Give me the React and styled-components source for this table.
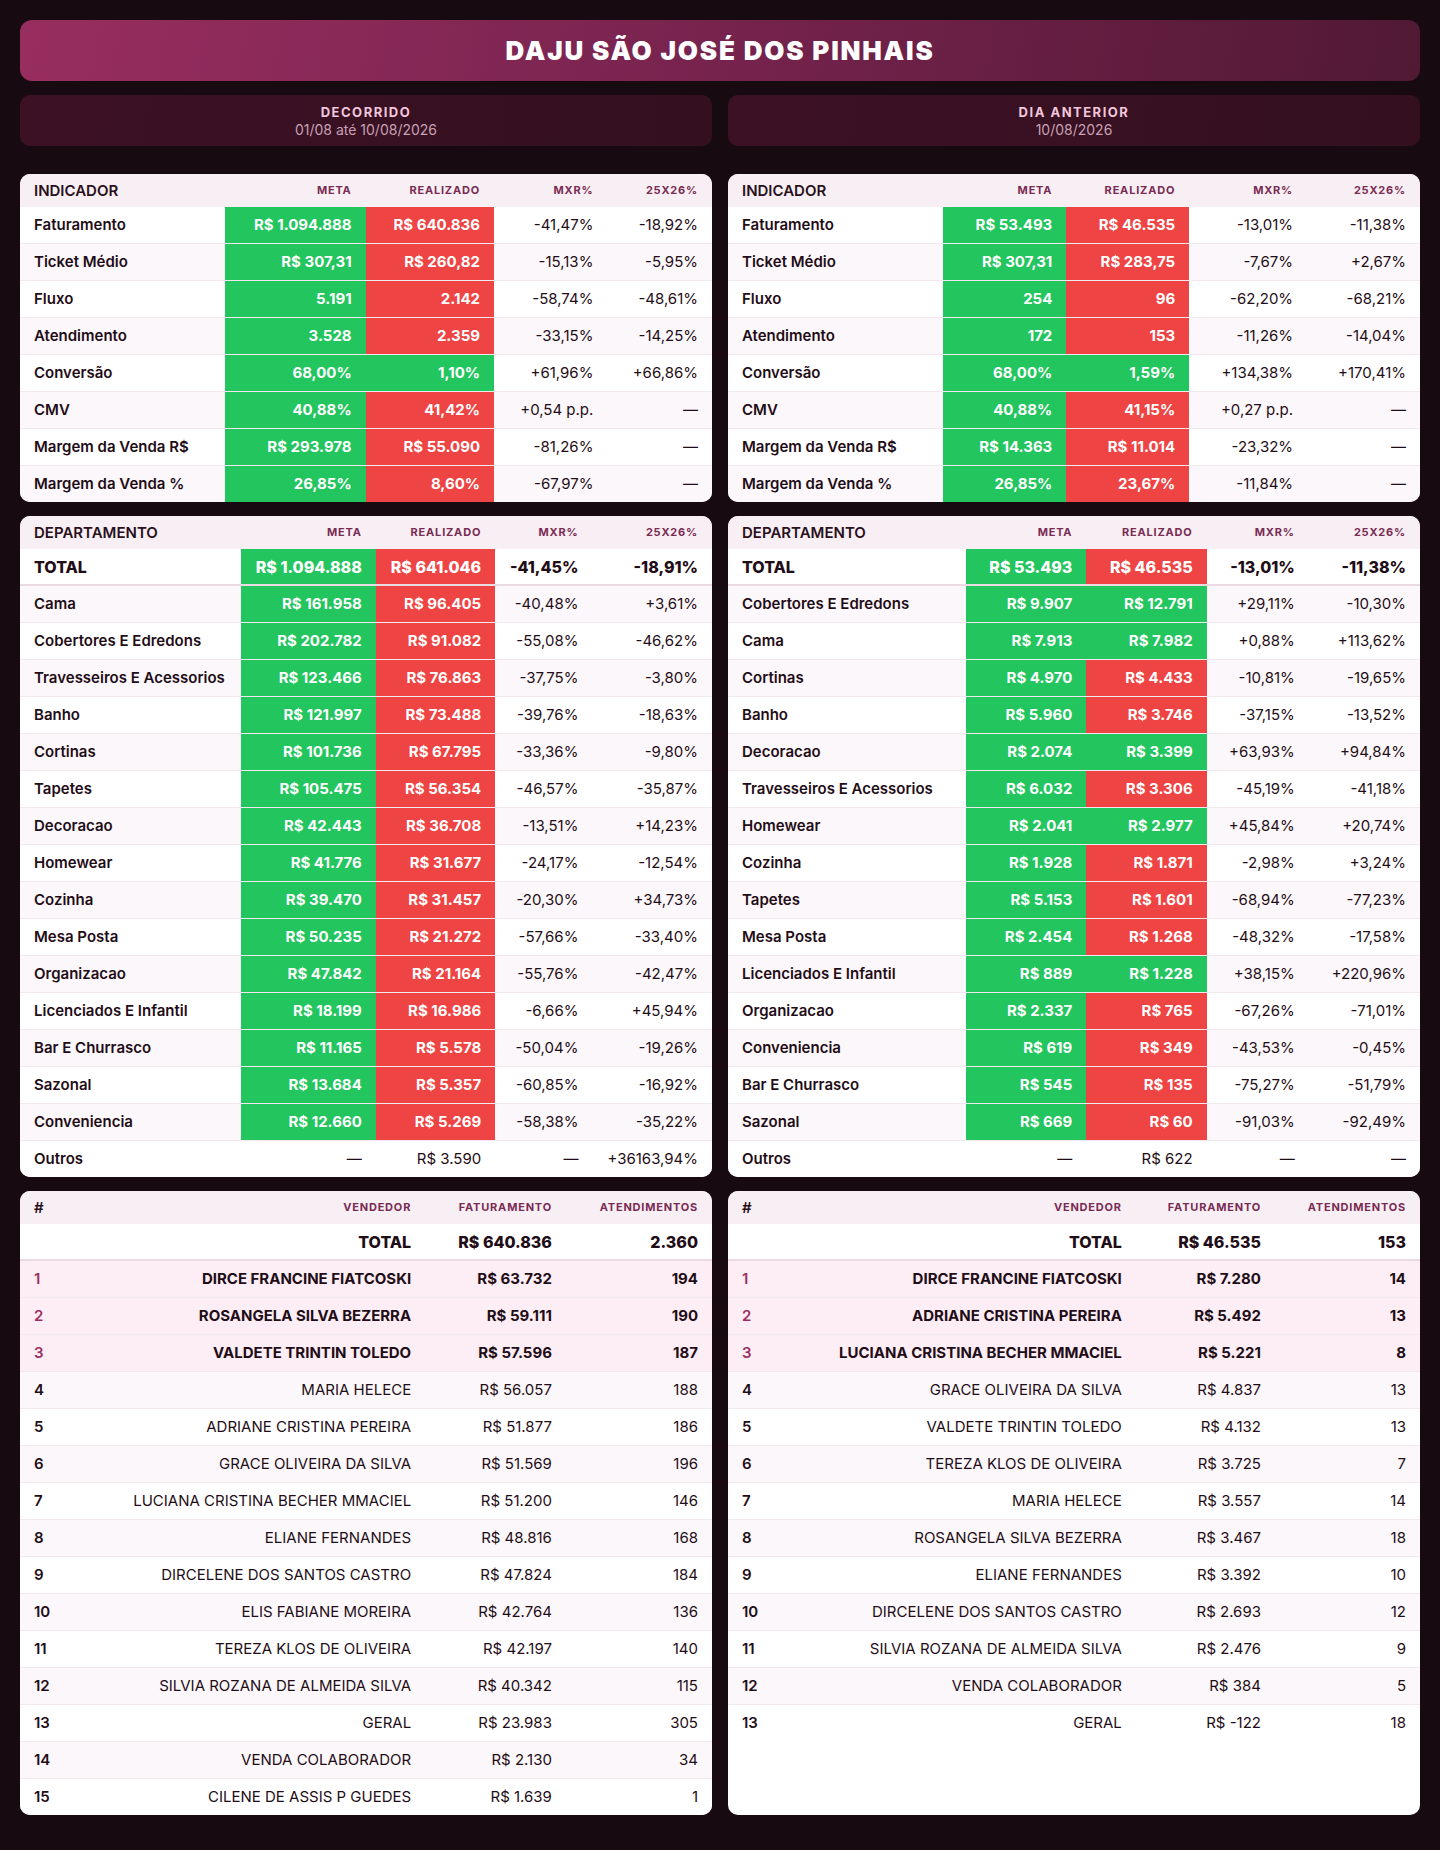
import React from "react";
import styled, { createGlobalStyle, css } from "styled-components";

const GlobalStyle = createGlobalStyle`
  * { box-sizing: border-box; }
  body {
    margin: 0;
    background: #170b11;
    font-family: Inter, "Noto Sans", "Liberation Sans", sans-serif;
    color: #1f0d17;
  }
`;

const Page = styled.div`
  min-height: 100vh;
  padding: 20px 20px 32px;
  background: #170b11;
`;

const Banner = styled.header`
  height: 61px;
  border-radius: 12px;
  background: linear-gradient(100deg, #982e60 0%, #7a2450 45%, #511934 100%);
  display: flex;
  align-items: center;
  justify-content: center;
  margin-bottom: 14px;
`;

const Title = styled.h1`
  margin: 0;
  color: #ffffff;
  font-size: 26px;
  font-weight: 900;
  letter-spacing: 1.8px;
`;

const Grid = styled.div`
  display: grid;
  grid-template-columns: 1fr 1fr;
  column-gap: 16px;
  row-gap: 14px;
  align-items: stretch;
`;

const PeriodCard = styled.div`
  height: 51px;
  border-radius: 10px;
  background: linear-gradient(100deg, #3c1126 0%, #34101f 100%);
  display: flex;
  flex-direction: column;
  align-items: center;
  justify-content: center;
  margin-bottom: 14px;
`;

const PeriodLabel = styled.div`
  color: #f2c6dc;
  font-size: 13px;
  font-weight: 700;
  letter-spacing: 1.5px;
  line-height: 16px;
`;

const PeriodDate = styled.div`
  color: #c9a0b4;
  font-size: 14px;
  line-height: 17px;
  margin-top: 1px;
`;

const Card = styled.section`
  background: #ffffff;
  border-radius: 10px;
  overflow: hidden;
`;

const Table = styled.table`
  width: 100%;
  border-collapse: collapse;
  font-size: 15px;
`;

const HeadCell = styled.th`
  background: #f7eff3;
  padding: 8px 14px;
  line-height: 17px;
  text-align: ${(p) => (p.$first ? "left" : "right")};
  white-space: nowrap;
  ${(p) =>
    p.$first
      ? css`
          font-size: 15px;
          font-weight: 600;
          color: #2a0f1d;
        `
      : css`
          font-size: 11px;
          font-weight: 700;
          color: #7a2b53;
          letter-spacing: 0.8px;
        `}
`;

const Row = styled.tr`
  background: ${(p) =>
    p.$top ? "#fceef4" : p.$alt ? "#fcf7fa" : "#ffffff"};

  & > td {
    border-bottom: ${(p) => (p.$total ? "2px solid #eadbe3" : "1px solid #f2e9ee")};
  }
  &:last-child > td {
    border-bottom: none;
  }
`;

const tones = {
  green: "#22c55e",
  red: "#ef4444",
};

const Cell = styled.td`
  padding: ${(p) => (p.$total ? "9px 14px 8px" : "9px 14px")};
  line-height: 18px;
  white-space: nowrap;
  text-align: ${(p) => p.$align || "right"};
  font-size: ${(p) => (p.$total ? "16px" : "15px")};
  font-weight: ${(p) => p.$weight || 400};
  color: ${(p) => (p.$tone ? "#ffffff" : p.$accent ? "#9b2f62" : "#1f0d17")};
  background: ${(p) => (p.$tone ? tones[p.$tone] : "transparent")};
`;

const indicadoresDecorrido = [
  ["Faturamento", "R$ 1.094.888", "R$ 640.836", "red", "-41,47%", "-18,92%"],
  ["Ticket Médio", "R$ 307,31", "R$ 260,82", "red", "-15,13%", "-5,95%"],
  ["Fluxo", "5.191", "2.142", "red", "-58,74%", "-48,61%"],
  ["Atendimento", "3.528", "2.359", "red", "-33,15%", "-14,25%"],
  ["Conversão", "68,00%", "1,10%", "green", "+61,96%", "+66,86%"],
  ["CMV", "40,88%", "41,42%", "red", "+0,54 p.p.", "—"],
  ["Margem da Venda R$", "R$ 293.978", "R$ 55.090", "red", "-81,26%", "—"],
  ["Margem da Venda %", "26,85%", "8,60%", "red", "-67,97%", "—"],
];

const indicadoresDia = [
  ["Faturamento", "R$ 53.493", "R$ 46.535", "red", "-13,01%", "-11,38%"],
  ["Ticket Médio", "R$ 307,31", "R$ 283,75", "red", "-7,67%", "+2,67%"],
  ["Fluxo", "254", "96", "red", "-62,20%", "-68,21%"],
  ["Atendimento", "172", "153", "red", "-11,26%", "-14,04%"],
  ["Conversão", "68,00%", "1,59%", "green", "+134,38%", "+170,41%"],
  ["CMV", "40,88%", "41,15%", "red", "+0,27 p.p.", "—"],
  ["Margem da Venda R$", "R$ 14.363", "R$ 11.014", "red", "-23,32%", "—"],
  ["Margem da Venda %", "26,85%", "23,67%", "red", "-11,84%", "—"],
];

const deptDecorrido = {
  total: ["TOTAL", "R$ 1.094.888", "R$ 641.046", "red", "-41,45%", "-18,91%"],
  rows: [
    ["Cama", "R$ 161.958", "R$ 96.405", "red", "-40,48%", "+3,61%"],
    ["Cobertores E Edredons", "R$ 202.782", "R$ 91.082", "red", "-55,08%", "-46,62%"],
    ["Travesseiros E Acessorios", "R$ 123.466", "R$ 76.863", "red", "-37,75%", "-3,80%"],
    ["Banho", "R$ 121.997", "R$ 73.488", "red", "-39,76%", "-18,63%"],
    ["Cortinas", "R$ 101.736", "R$ 67.795", "red", "-33,36%", "-9,80%"],
    ["Tapetes", "R$ 105.475", "R$ 56.354", "red", "-46,57%", "-35,87%"],
    ["Decoracao", "R$ 42.443", "R$ 36.708", "red", "-13,51%", "+14,23%"],
    ["Homewear", "R$ 41.776", "R$ 31.677", "red", "-24,17%", "-12,54%"],
    ["Cozinha", "R$ 39.470", "R$ 31.457", "red", "-20,30%", "+34,73%"],
    ["Mesa Posta", "R$ 50.235", "R$ 21.272", "red", "-57,66%", "-33,40%"],
    ["Organizacao", "R$ 47.842", "R$ 21.164", "red", "-55,76%", "-42,47%"],
    ["Licenciados E Infantil", "R$ 18.199", "R$ 16.986", "red", "-6,66%", "+45,94%"],
    ["Bar E Churrasco", "R$ 11.165", "R$ 5.578", "red", "-50,04%", "-19,26%"],
    ["Sazonal", "R$ 13.684", "R$ 5.357", "red", "-60,85%", "-16,92%"],
    ["Conveniencia", "R$ 12.660", "R$ 5.269", "red", "-58,38%", "-35,22%"],
    ["Outros", "—", "R$ 3.590", null, "—", "+36163,94%"],
  ],
};

const deptDia = {
  total: ["TOTAL", "R$ 53.493", "R$ 46.535", "red", "-13,01%", "-11,38%"],
  rows: [
    ["Cobertores E Edredons", "R$ 9.907", "R$ 12.791", "green", "+29,11%", "-10,30%"],
    ["Cama", "R$ 7.913", "R$ 7.982", "green", "+0,88%", "+113,62%"],
    ["Cortinas", "R$ 4.970", "R$ 4.433", "red", "-10,81%", "-19,65%"],
    ["Banho", "R$ 5.960", "R$ 3.746", "red", "-37,15%", "-13,52%"],
    ["Decoracao", "R$ 2.074", "R$ 3.399", "green", "+63,93%", "+94,84%"],
    ["Travesseiros E Acessorios", "R$ 6.032", "R$ 3.306", "red", "-45,19%", "-41,18%"],
    ["Homewear", "R$ 2.041", "R$ 2.977", "green", "+45,84%", "+20,74%"],
    ["Cozinha", "R$ 1.928", "R$ 1.871", "red", "-2,98%", "+3,24%"],
    ["Tapetes", "R$ 5.153", "R$ 1.601", "red", "-68,94%", "-77,23%"],
    ["Mesa Posta", "R$ 2.454", "R$ 1.268", "red", "-48,32%", "-17,58%"],
    ["Licenciados E Infantil", "R$ 889", "R$ 1.228", "green", "+38,15%", "+220,96%"],
    ["Organizacao", "R$ 2.337", "R$ 765", "red", "-67,26%", "-71,01%"],
    ["Conveniencia", "R$ 619", "R$ 349", "red", "-43,53%", "-0,45%"],
    ["Bar E Churrasco", "R$ 545", "R$ 135", "red", "-75,27%", "-51,79%"],
    ["Sazonal", "R$ 669", "R$ 60", "red", "-91,03%", "-92,49%"],
    ["Outros", "—", "R$ 622", null, "—", "—"],
  ],
};

const vendedoresDecorrido = {
  total: ["R$ 640.836", "2.360"],
  rows: [
    ["DIRCE FRANCINE FIATCOSKI", "R$ 63.732", "194"],
    ["ROSANGELA SILVA BEZERRA", "R$ 59.111", "190"],
    ["VALDETE TRINTIN TOLEDO", "R$ 57.596", "187"],
    ["MARIA HELECE", "R$ 56.057", "188"],
    ["ADRIANE CRISTINA PEREIRA", "R$ 51.877", "186"],
    ["GRACE OLIVEIRA DA SILVA", "R$ 51.569", "196"],
    ["LUCIANA CRISTINA BECHER MMACIEL", "R$ 51.200", "146"],
    ["ELIANE FERNANDES", "R$ 48.816", "168"],
    ["DIRCELENE DOS SANTOS CASTRO", "R$ 47.824", "184"],
    ["ELIS FABIANE MOREIRA", "R$ 42.764", "136"],
    ["TEREZA KLOS DE OLIVEIRA", "R$ 42.197", "140"],
    ["SILVIA ROZANA DE ALMEIDA SILVA", "R$ 40.342", "115"],
    ["GERAL", "R$ 23.983", "305"],
    ["VENDA COLABORADOR", "R$ 2.130", "34"],
    ["CILENE DE ASSIS P GUEDES", "R$ 1.639", "1"],
  ],
};

const vendedoresDia = {
  total: ["R$ 46.535", "153"],
  rows: [
    ["DIRCE FRANCINE FIATCOSKI", "R$ 7.280", "14"],
    ["ADRIANE CRISTINA PEREIRA", "R$ 5.492", "13"],
    ["LUCIANA CRISTINA BECHER MMACIEL", "R$ 5.221", "8"],
    ["GRACE OLIVEIRA DA SILVA", "R$ 4.837", "13"],
    ["VALDETE TRINTIN TOLEDO", "R$ 4.132", "13"],
    ["TEREZA KLOS DE OLIVEIRA", "R$ 3.725", "7"],
    ["MARIA HELECE", "R$ 3.557", "14"],
    ["ROSANGELA SILVA BEZERRA", "R$ 3.467", "18"],
    ["ELIANE FERNANDES", "R$ 3.392", "10"],
    ["DIRCELENE DOS SANTOS CASTRO", "R$ 2.693", "12"],
    ["SILVIA ROZANA DE ALMEIDA SILVA", "R$ 2.476", "9"],
    ["VENDA COLABORADOR", "R$ 384", "5"],
    ["GERAL", "R$ -122", "18"],
  ],
};

function MetricRow({ row, index, total }) {
  const [label, meta, real, tone, mxr, yoy] = row;
  const weight = total ? 800 : 700;
  return (
    <Row $alt={!total && index % 2 === 1} $total={total}>
      <Cell $align="left" $weight={total ? 800 : 600} $total={total}>
        {label}
      </Cell>
      <Cell $tone={tone ? "green" : null} $weight={tone ? weight : 400} $total={total}>
        {meta}
      </Cell>
      <Cell $tone={tone} $weight={tone ? weight : 400} $total={total}>
        {real}
      </Cell>
      <Cell $weight={total ? 800 : 400} $total={total}>
        {mxr}
      </Cell>
      <Cell $weight={total ? 800 : 400} $total={total}>
        {yoy}
      </Cell>
    </Row>
  );
}

function MetricTable({ title, rows, total }) {
  return (
    <Card>
      <Table>
        <thead>
          <tr>
            <HeadCell $first>{title}</HeadCell>
            <HeadCell>META</HeadCell>
            <HeadCell>REALIZADO</HeadCell>
            <HeadCell>MXR%</HeadCell>
            <HeadCell>25X26%</HeadCell>
          </tr>
        </thead>
        <tbody>
          {total && <MetricRow row={total} index={0} total />}
          {rows.map((row, i) => (
            <MetricRow key={row[0]} row={row} index={total ? i + 1 : i} />
          ))}
        </tbody>
      </Table>
    </Card>
  );
}

function SellerTable({ data }) {
  return (
    <Card>
      <Table>
        <thead>
          <tr>
            <HeadCell $first>#</HeadCell>
            <HeadCell>VENDEDOR</HeadCell>
            <HeadCell>FATURAMENTO</HeadCell>
            <HeadCell>ATENDIMENTOS</HeadCell>
          </tr>
        </thead>
        <tbody>
          <Row $total>
            <Cell $total />
            <Cell $total $weight={800}>
              TOTAL
            </Cell>
            <Cell $total $weight={800}>
              {data.total[0]}
            </Cell>
            <Cell $total $weight={800}>
              {data.total[1]}
            </Cell>
          </Row>
          {data.rows.map(([name, fat, atend], i) => {
            const top = i < 3;
            return (
              <Row key={name} $top={top} $alt={i % 2 === 1}>
                <Cell $align="left" $weight={600} $accent={top}>
                  {i + 1}
                </Cell>
                <Cell $weight={top ? 700 : 400}>{name}</Cell>
                <Cell $weight={top ? 700 : 400}>{fat}</Cell>
                <Cell $weight={top ? 700 : 400}>{atend}</Cell>
              </Row>
            );
          })}
        </tbody>
      </Table>
    </Card>
  );
}

export default function App() {
  return (
    <>
      <GlobalStyle />
      <Page>
        <Banner>
          <Title>DAJU SÃO JOSÉ DOS PINHAIS</Title>
        </Banner>
        <Grid>
          <PeriodCard>
            <PeriodLabel>DECORRIDO</PeriodLabel>
            <PeriodDate>01/08 até 10/08/2026</PeriodDate>
          </PeriodCard>
          <PeriodCard>
            <PeriodLabel>DIA ANTERIOR</PeriodLabel>
            <PeriodDate>10/08/2026</PeriodDate>
          </PeriodCard>

          <MetricTable title="INDICADOR" rows={indicadoresDecorrido} />
          <MetricTable title="INDICADOR" rows={indicadoresDia} />

          <MetricTable title="DEPARTAMENTO" rows={deptDecorrido.rows} total={deptDecorrido.total} />
          <MetricTable title="DEPARTAMENTO" rows={deptDia.rows} total={deptDia.total} />

          <SellerTable data={vendedoresDecorrido} />
          <SellerTable data={vendedoresDia} />
        </Grid>
      </Page>
    </>
  );
}
